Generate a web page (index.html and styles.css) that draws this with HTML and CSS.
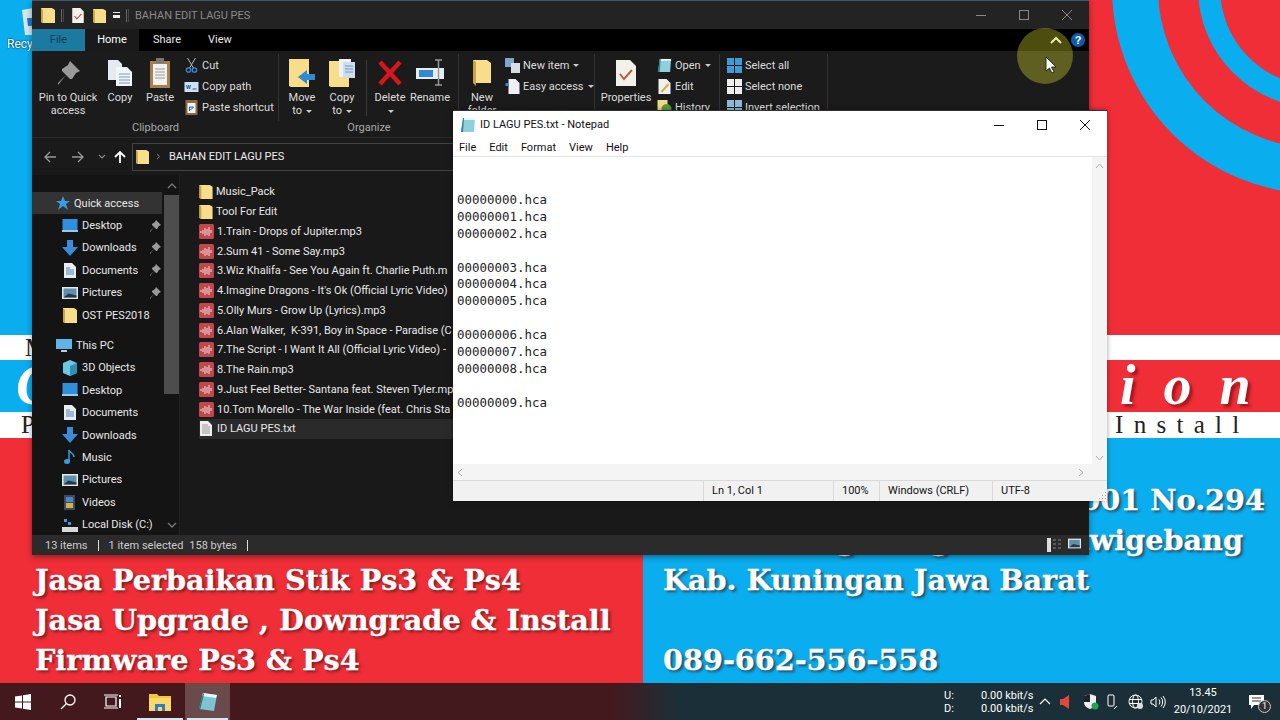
FILE: index.html
```html
<!DOCTYPE html>
<html lang="en">
<head>
    <meta charset="UTF-8">
    <title>ID LAGU PES.txt - Notepad</title>
    <link rel="stylesheet" href="styles.css">
</head>
<body>
    <svg class="sprites" width="0" height="0">
        <symbol id="folder" viewBox="0 0 14 16"><path d="M0 1h11l3 2v13H2l-2-1z" fill="#f8dd8a"/><path d="M0 1l2 2v13l-2-1z" fill="#c9a344"/></symbol>
        <symbol id="audio" viewBox="0 0 15 15"><rect width="15" height="15" rx="1.5" fill="#c0474c"/><path d="M2 7v2M4 6v4M6 4v8M8 5v6M10 3v9M12 6v3" stroke="#f4dddd" stroke-width="1"/></symbol>
        <symbol id="txt" viewBox="0 0 12 15"><path d="M0 0h8l4 4v11H0z" fill="#eee"/><path d="M2 4h6M2 6h8M2 8h8M2 10h8M2 12h8" stroke="#888" stroke-width=".8"/></symbol>
        <symbol id="note" viewBox="0 0 16 16"><path d="M3 1h12l-1 14H1z" fill="#8fd0dc"/><path d="M3 1h12v2H3z" fill="#e8f6f8"/><path d="M1 15l2-14 1 0-1 14z" fill="#2f7f96"/></symbol>
        <symbol id="check" viewBox="0 0 20 26"><path d="M0 0h14l6 6v20H0z" fill="#f3f1ec"/><path d="M4 14l4 5 8-9" fill="none" stroke="#c4583a" stroke-width="2"/></symbol>
        <symbol id="pages" viewBox="0 0 24 26"><path d="M0 0h10l4 4v16H0z" fill="#e6e9ef"/><path d="M8 7h11l5 5v14H8z" fill="#f3f6fb"/><path d="M11 14h11M11 17h11M11 20h11M11 23h11" stroke="#6f98c9"/></symbol>
        <symbol id="desktop" viewBox="0 0 16 14"><rect width="15" height="11" x=".5" fill="#2e8fdc"/><rect y="11" width="16" height="2" fill="#9cc7ea"/></symbol>
        <symbol id="down" viewBox="0 0 16 16"><path d="M5 0h6v7h5l-8 9-8-9h5z" fill="#3a8bd8"/></symbol>
        <symbol id="doc" viewBox="0 0 12 15"><path d="M0 0h8l4 4v11H0z" fill="#e9edf2"/><path d="M2 5h4M2 7h8M2 9h8M2 11h8" stroke="#4b87b5"/></symbol>
        <symbol id="pic" viewBox="0 0 16 12"><rect width="16" height="12" fill="#e8e8e8"/><rect x="1.5" y="1.5" width="13" height="9" fill="#5f8fae"/><path d="M1.5 10.500l5-4 8 2v2z" fill="#24384a"/></symbol>
        <symbol id="pin" viewBox="0 0 12 12"><path d="M7 0l5 5-2 1-2 3-1 0-2-2-4 5 0-1 4-4-2-2 0-1 3-2z" fill="#9a9a9a"/></symbol>
        <symbol id="grid" viewBox="0 0 15 15"><path d="M0 0h7v7H0zM8 0h7v7H8zM0 8h7v7H0zM8 8h7v7H8z"/></symbol>
    </svg>

    <div class="desktop">
        <div class="wallpaper">
            <div class="wp-blue"></div><div class="wp-red"></div>
            <div class="wp-white"></div><div class="wp-white"></div>
            <div class="wp-blue"></div><div class="wp-red"></div>
            <div class="wp-white"></div><div class="wp-white"></div>
            <div class="wp-red"></div><div class="wp-blue"></div>
        </div>
        <svg class="arcs" width="192" height="335" viewBox="1088 0 192 335">
            <circle cx="1318" cy="-12" r="206" fill="#0aaeef"/>
            <circle cx="1318" cy="-12" r="160" fill="#ef2e37"/>
            <circle cx="1318" cy="-12" r="120" fill="#0aaeef"/>
            <circle cx="1318" cy="-12" r="98" fill="#ef2e37"/>
        </svg>

        <div class="bin">
            <svg width="11" height="27" viewBox="0 0 11 27"><path d="M0 2l11-2v27H3z" fill="#d5e6ee"/><path d="M5 10h6v8H6z" fill="#1c7cc0"/></svg>
            <span>Recy</span>
        </div>
        <span class="wp-serif wp-m">M</span>
        <span class="wp-serif wp-p">P</span>
        <span class="wp-c">C</span>
        <span class="wp-ion">i o n</span>
        <span class="wp-serif wp-install">Install</span>
        <div class="promo promo-left">
            <p>Jasa Perbaikan Stik Ps3 &amp; Ps4</p>
            <p>Jasa Upgrade , Downgrade &amp; Install</p>
            <p>Firmware Ps3 &amp; Ps4</p>
        </div>
        <div class="promo promo-right">
            <p>Kab. Kuningan Jawa Barat</p>
            <p class="phone">089-662-556-558</p>
        </div>
        <span class="promo-line addr-a">001 No.294</span>
        <span class="promo-line addr-b">awigebang</span>
        <span class="promo-line g-a">g</span>
        <span class="promo-line g-b">g</span>

        <!-- file explorer -->
        <div class="explorer">
            <div class="ex-title">
                <svg class="i14" width="14" height="16"><use href="#folder"/></svg>
                <span class="bar"></span>
                <svg class="qa-check" width="12" height="15"><use href="#check"/></svg>
                <svg class="qa-folder" width="13" height="15"><use href="#folder"/></svg>
                <span class="qa-drop"></span>
                <span class="bar"></span>
                <span class="ex-name">BAHAN EDIT LAGU PES</span>
                <div class="win-btns dim">
                    <svg width="12" height="12"><path d="M1 6.500h10" stroke="currentColor"/></svg>
                    <svg width="12" height="12"><rect x="1.500" y="1.500" width="9" height="9" fill="none" stroke="currentColor"/></svg>
                    <svg width="12" height="12"><path d="M1 1l10 10M11 1L1 11" stroke="currentColor"/></svg>
                </div>
            </div>
            <div class="ex-tabs">
                <span class="tab tab-file">File</span>
                <span class="tab tab-home">Home</span>
                <span class="tab tab-share">Share</span>
                <span class="tab tab-view">View</span>
                <svg class="collapse" width="12" height="8"><path d="M1 7l5-5 5 5" fill="none" stroke="#eee" stroke-width="2"/></svg>
                <span class="help">?</span>
            </div>
            <div class="ribbon">
                <section class="rb-group g-clip">
                    <div class="rb-items">
                        <div class="big w58"><svg width="24" height="26" viewBox="0 0 12 12"><use href="#pin"/></svg><span>Pin to Quick<br>access</span></div>
                        <div class="big w40"><svg width="24" height="26"><use href="#pages"/></svg><span>Copy</span></div>
                        <div class="big w40"><svg width="20" height="30" viewBox="0 0 20 30"><rect y="3" width="20" height="27" fill="#a8804f"/><rect x="3" y="6" width="14" height="21" fill="#f2f2f2"/><path d="M5 11h10M5 14h10M5 17h10M5 20h10" stroke="#999"/><rect x="6" width="8" height="5" fill="#777"/></svg><span>Paste</span></div>
                        <div class="small-col">
                            <div class="small"><svg width="12" height="15" viewBox="0 0 12 15"><path d="M2 0l6 10M10 0L4 10" stroke="#bbb" stroke-width="1"/><circle cx="3" cy="12" r="2.200" fill="none" stroke="#3a8bd8" stroke-width="1.300"/><circle cx="9" cy="12" r="2.200" fill="none" stroke="#3a8bd8" stroke-width="1.300"/></svg>Cut</div>
                            <div class="small"><svg width="14" height="10" viewBox="0 0 14 10"><rect width="14" height="10" fill="#cfe2f3"/><path d="M2 3l1 4 1-4 1 4 1-4M8 7h4" stroke="#1d5f99" fill="none"/></svg>Copy path</div>
                            <div class="small"><svg width="12" height="15" viewBox="0 0 12 15"><rect width="12" height="15" fill="#8a6b45"/><rect x="2" y="3" width="8" height="10" fill="#f2f2f2"/><path d="M4 11V7h4M8 7L5 10" stroke="#1d5f99" fill="none"/></svg>Paste shortcut</div>
                        </div>
                    </div>
                    <p class="rb-label">Clipboard</p>
                </section>
                <section class="rb-group g-org">
                    <div class="rb-items">
                        <div class="big w40"><svg width="26" height="28" viewBox="0 0 26 28"><path d="M0 0h20v28H2l-2-1z" fill="#f8dd8a"/><path d="M26 15H18v-4l-9 7 9 7v-4h8z" fill="#2f8ad2"/></svg><span>Move<br>to <i class="caret"></i></span></div>
                        <div class="big w40"><svg width="26" height="28" viewBox="0 0 26 28"><path d="M0 2h20v26H2l-2-1z" fill="#f8dd8a"/><path d="M10 0h12v18H10z" fill="#eef2f8"/><path d="M14 3h12v16H14z" fill="#cfdcec"/><path d="M16 7h8M16 10h8M16 13h8" stroke="#6f98c9"/></svg><span>Copy<br>to <i class="caret"></i></span></div>
                        <span class="rb-sep"></span>
                        <div class="big w40"><svg width="26" height="28" viewBox="0 0 26 28"><path d="M3 3l20 22M23 3L3 25" stroke="#d8161c" stroke-width="4.500"/></svg><span>Delete<br><i class="caret"></i></span></div>
                        <div class="big w40 rename"><svg width="28" height="28" viewBox="0 0 28 28"><path d="M0 9h28v11H0z" fill="#e4eef6"/><rect x="3" y="11" width="14" height="7" fill="#2f8ad2"/><path d="M19 1h7M22.500 1v25M19 26h7" stroke="#999" stroke-width="1.500" fill="none"/></svg><span>Rename</span></div>
                    </div>
                    <p class="rb-label">Organize</p>
                </section>
                <section class="rb-group g-new">
                    <div class="rb-items">
                        <div class="big w40"><svg width="18" height="26" viewBox="0 0 18 26"><path d="M0 0h14l4 3v20H2l-2-1z" fill="#f8dd8a"/><path d="M0 0l3 2v24l-3-3z" fill="#c9a344"/></svg><span>New<br>folder</span></div>
                        <div class="small-col">
                            <div class="small"><svg width="15" height="15" viewBox="0 0 15 15"><path d="M0 0h9v9H0z" fill="#7da7cf"/><path d="M6 5h9v10H6z" fill="#d9dde3"/></svg>New item <i class="caret"></i></div>
                            <div class="small"><svg width="14" height="15" viewBox="0 0 14 15"><path d="M3 0h7l4 4v11H3z" fill="#eef0f3"/><path d="M0 4h3v3H0z" fill="#2f8ad2"/></svg>Easy access <i class="caret"></i></div>
                        </div>
                    </div>
                </section>
                <section class="rb-group g-open">
                    <div class="rb-items">
                        <div class="big w62"><svg width="20" height="26"><use href="#check"/></svg><span>Properties<br><i class="caret"></i></span></div>
                        <div class="small-col">
                            <div class="small"><svg width="14" height="15"><use href="#note"/></svg>Open <i class="caret"></i></div>
                            <div class="small"><svg width="12" height="15" viewBox="0 0 12 15"><path d="M0 0h8l4 4v11H0z" fill="#eef0f3"/><path d="M3 13l7-8" stroke="#d8b23a" stroke-width="2"/></svg>Edit</div>
                            <div class="small"><svg width="14" height="15" viewBox="0 0 14 15"><path d="M0 0h10v15H0z" fill="#f0d98a"/><circle cx="9" cy="9" r="5" fill="#5b9a3c"/></svg>History</div>
                        </div>
                    </div>
                </section>
                <section class="rb-group g-select">
                    <div class="rb-items">
                        <div class="small-col">
                            <div class="small"><svg class="g-blue" width="15" height="15"><use href="#grid"/></svg>Select all</div>
                            <div class="small"><svg class="g-white" width="15" height="15"><use href="#grid"/></svg>Select none</div>
                            <div class="small"><svg class="g-mix" width="15" height="15"><use href="#grid"/></svg>Invert selection</div>
                        </div>
                    </div>
                </section>
            </div>
            <div class="ex-address">
                <svg class="nav-arrow" width="14" height="12"><path d="M13 6H2M7 1L2 6l5 5" fill="none" stroke="#999" stroke-width="1.300"/></svg>
                <svg class="nav-arrow" width="14" height="12"><path d="M1 6h11M7 1l5 5-5 5" fill="none" stroke="#999" stroke-width="1.300"/></svg>
                <svg class="nav-drop" width="8" height="6"><path d="M1 1l3 3 3-3" fill="none" stroke="#888" stroke-width="1.200"/></svg>
                <svg class="nav-up" width="12" height="13"><path d="M6 13V2M1 7l5-5 5 5" fill="none" stroke="#fff" stroke-width="1.800"/></svg>
                <div class="addr-box">
                    <svg width="13" height="15"><use href="#folder"/></svg>
                    <svg class="crumb" width="5" height="7"><path d="M1 1l2.500 2.500L1 6" fill="none" stroke="#888"/></svg>
                    <span>BAHAN EDIT LAGU PES</span>
                </div>
            </div>
            <div class="ex-body">
                <nav class="nav-pane">
                    <div class="nav-list">
                        <div class="nav-row top active"><svg width="14" height="14" viewBox="0 0 14 14"><path d="M7 0l2 5h5l-4 3 2 6-5-4-5 4 2-6-4-3h5z" fill="#3a9be0"/></svg>Quick access</div>
                        <div class="nav-row"><svg width="16" height="14"><use href="#desktop"/></svg>Desktop<svg class="pin" width="12" height="12"><use href="#pin"/></svg></div>
                        <div class="nav-row"><svg width="16" height="16"><use href="#down"/></svg>Downloads<svg class="pin" width="12" height="12"><use href="#pin"/></svg></div>
                        <div class="nav-row"><svg width="16" height="15" viewBox="-2 0 16 15"><use href="#doc" width="12" height="15"/></svg>Documents<svg class="pin" width="12" height="12"><use href="#pin"/></svg></div>
                        <div class="nav-row"><svg width="16" height="12"><use href="#pic"/></svg>Pictures<svg class="pin" width="12" height="12"><use href="#pin"/></svg></div>
                        <div class="nav-row"><svg width="16" height="16" viewBox="-1 0 16 16"><use href="#folder" width="14" height="16"/></svg>OST PES2018</div>
                        <div class="nav-row top gap"><svg width="16" height="14" viewBox="0 0 16 14"><rect width="16" height="10" fill="#5fb4e8"/><path d="M5 12h6" stroke="#ccc" stroke-width="2"/></svg>This PC</div>
                        <div class="nav-row"><svg width="16" height="16" viewBox="0 0 16 16"><path d="M8 0l7 3v10l-7 3-7-3V3z" fill="#6ec6e2"/><path d="M8 6l7-3v10l-7 3z" fill="#2f8fb5"/></svg>3D Objects</div>
                        <div class="nav-row"><svg width="16" height="14"><use href="#desktop"/></svg>Desktop</div>
                        <div class="nav-row"><svg width="16" height="15" viewBox="-2 0 16 15"><use href="#doc" width="12" height="15"/></svg>Documents</div>
                        <div class="nav-row"><svg width="16" height="16"><use href="#down"/></svg>Downloads</div>
                        <div class="nav-row"><svg width="16" height="16" viewBox="0 0 16 16"><path d="M7 1v11" stroke="#3a9be0" stroke-width="1.500"/><path d="M7 1c1 3 5 3 5 7" fill="none" stroke="#3a9be0" stroke-width="1.500"/><ellipse cx="5" cy="12.500" rx="3" ry="2.500" fill="#3a9be0"/></svg>Music</div>
                        <div class="nav-row"><svg width="16" height="12"><use href="#pic"/></svg>Pictures</div>
                        <div class="nav-row"><svg width="16" height="15" viewBox="0 0 16 15"><rect x="2" width="11" height="15" fill="#3b4a63"/><rect x="4" y="2" width="7" height="5" fill="#4f86c9"/><rect x="4" y="8" width="7" height="5" fill="#d8b23a"/></svg>Videos</div>
                        <div class="nav-row"><svg width="16" height="14" viewBox="0 0 16 14"><path d="M0 9h16v5H0z" fill="#d9d9d9"/><path d="M2 1h3v3H2zM6 4h3v3H6z" fill="#3a9be0"/></svg>Local Disk (C:)</div>
                    </div>
                    <div class="nav-scroll">
                        <svg width="10" height="6"><path d="M1 5l4-4 4 4" fill="none" stroke="#777" stroke-width="1.300"/></svg>
                        <span class="nav-thumb"></span>
                        <svg width="10" height="6"><path d="M1 1l4 4 4-4" fill="none" stroke="#777" stroke-width="1.300"/></svg>
                    </div>
                </nav>
                <div class="file-list">
                    <div class="file"><svg width="14" height="15"><use href="#folder"/></svg>Music_Pack</div>
                    <div class="file"><svg width="14" height="15"><use href="#folder"/></svg>Tool For Edit</div>
                    <div class="file"><svg width="15" height="15"><use href="#audio"/></svg>1.Train - Drops of Jupiter.mp3</div>
                    <div class="file"><svg width="15" height="15"><use href="#audio"/></svg>2.Sum 41 - Some Say.mp3</div>
                    <div class="file"><svg width="15" height="15"><use href="#audio"/></svg>3.Wiz Khalifa - See You Again ft. Charlie Puth.m</div>
                    <div class="file"><svg width="15" height="15"><use href="#audio"/></svg>4.Imagine Dragons - It's Ok (Official Lyric Video)</div>
                    <div class="file"><svg width="15" height="15"><use href="#audio"/></svg>5.Olly Murs - Grow Up (Lyrics).mp3</div>
                    <div class="file"><svg width="15" height="15"><use href="#audio"/></svg>6.Alan Walker,&nbsp; K-391, Boy in Space - Paradise (C</div>
                    <div class="file"><svg width="15" height="15"><use href="#audio"/></svg>7.The Script - I Want It All (Official Lyric Video) -</div>
                    <div class="file"><svg width="15" height="15"><use href="#audio"/></svg>8.The Rain.mp3</div>
                    <div class="file"><svg width="15" height="15"><use href="#audio"/></svg>9.Just Feel Better- Santana feat. Steven Tyler.mp</div>
                    <div class="file"><svg width="15" height="15"><use href="#audio"/></svg>10.Tom Morello - The War Inside (feat. Chris Sta</div>
                    <div class="file selected"><svg width="15" height="15" viewBox="-1 0 15 15"><use href="#txt" width="12" height="15"/></svg>ID LAGU PES.txt</div>
                </div>
            </div>
            <div class="ex-status">
                <span>13 items</span><span class="st-bar"></span><span>1 item selected</span><span class="st-bytes">158 bytes</span><span class="st-bar"></span>
                <div class="view-btns">
                    <svg width="15" height="14" viewBox="0 0 15 14"><path d="M0 0h4v14H0z" fill="#ddd"/><path d="M6 2h3M11 2h3M6 6h3M11 6h3M6 10h3M11 10h3" stroke="#888"/></svg>
                    <svg width="13" height="11"><use href="#pic"/></svg>
                </div>
            </div>
        </div>

        <!-- cursor highlight -->
        <span class="cursor-glow"></span>
        <svg class="cursor" width="12" height="18" viewBox="0 0 12 18"><path d="M1 1v14l3.500-3 2.500 5 2-1-2.500-5H11z" fill="#fff" stroke="#111" stroke-width=".8"/></svg>

        <!-- notepad -->
        <div class="notepad">
            <div class="np-title">
                <svg width="16" height="16"><use href="#note"/></svg>
                <span>ID LAGU PES.txt - Notepad</span>
                <div class="win-btns">
                    <svg width="12" height="12"><path d="M1 6.500h10" stroke="currentColor"/></svg>
                    <svg width="12" height="12"><rect x="1.500" y="1.500" width="9" height="9" fill="none" stroke="currentColor"/></svg>
                    <svg width="12" height="12"><path d="M1 1l10 10M11 1L1 11" stroke="currentColor"/></svg>
                </div>
            </div>
            <div class="np-menu"><span>File</span><span>Edit</span><span>Format</span><span>View</span><span>Help</span></div>
            <div class="np-main">
                <pre class="np-text">

00000000.hca
00000001.hca
00000002.hca

00000003.hca
00000004.hca
00000005.hca

00000006.hca
00000007.hca
00000008.hca

00000009.hca</pre>
                <div class="np-vscroll">
                    <svg width="9" height="6"><path d="M1 5l3.500-4L8 5" fill="none" stroke="#aaa"/></svg>
                    <svg width="9" height="6"><path d="M1 1l3.500 4L8 1" fill="none" stroke="#aaa"/></svg>
                </div>
            </div>
            <div class="np-hscroll">
                <svg width="6" height="9"><path d="M5 1L1 4.500 5 8" fill="none" stroke="#aaa"/></svg>
                <svg width="6" height="9"><path d="M1 1l4 3.500L1 8" fill="none" stroke="#aaa"/></svg>
            </div>
            <div class="np-status">
                <span class="cell c-pos">Ln 1, Col 1</span>
                <span class="cell c-zoom">100%</span>
                <span class="cell c-eol">Windows (CRLF)</span>
                <span class="cell c-enc">UTF-8</span>
                <svg class="grip" width="10" height="10" viewBox="0 0 10 10"><path d="M8 2h1v1H8zM5 5h1v1H5zM8 5h1v1H8zM2 8h1v1H2zM5 8h1v1H5zM8 8h1v1H8z" fill="#aaa"/></svg>
            </div>
        </div>
    </div>

    <footer class="taskbar">
        <div class="tb-btn"><svg width="16" height="16" viewBox="0 0 16 16"><path d="M0 2.500l7-1v6H0zM8 1.300L16 0v7.500H8zM0 8.500h7v6l-7-1zM8 8.500h8V16l-8-1.200z" fill="#fff"/></svg></div>
        <div class="tb-btn"><svg width="16" height="16" viewBox="0 0 16 16"><circle cx="10" cy="6" r="5" fill="none" stroke="#fff" stroke-width="1.300"/><path d="M6.500 9.500L1 15" stroke="#fff" stroke-width="1.300"/></svg></div>
        <div class="tb-btn"><svg width="18" height="15" viewBox="0 0 18 15"><path d="M2 3h10v9H2zM0 1h14M0 14h14" fill="none" stroke="#fff" stroke-width="1.200"/><path d="M16 1v2M16 5v9" stroke="#fff" stroke-width="2"/></svg></div>
        <div class="tb-btn on wide"><svg width="22" height="18" viewBox="0 0 22 18"><path d="M0 1h8l2 2h12v15H0z" fill="#f4c63c"/><path d="M0 5h22v13H0z" fill="#fbd968"/><path d="M6 18v-7h10v7h-3v-4H9v4z" fill="#2b7fc4"/></svg></div>
        <div class="tb-btn on active"><svg width="20" height="20" viewBox="0 0 20 20"><path d="M5 1l14 2-3 16L1 17z" fill="#7cc4cf"/><path d="M5 1l14 2-1 3L4 4z" fill="#eaf6f8"/><path d="M5 1L1 17l1 1 4-16z" fill="#1f6f87"/></svg></div>
        <div class="tray">
            <div class="net"><span>U:</span><span>0.00 kbit/s</span><span>D:</span><span>0.00 kbit/s</span></div>
            <svg class="tray-i t-chev" width="12" height="7"><path d="M1 6l5-5 5 5" fill="none" stroke="#fff" stroke-width="1.200"/></svg>
            <svg class="tray-i t-spk" width="16" height="16" viewBox="0 0 16 16"><path d="M2 5h3l6-4v14l-6-4H2z" fill="#e0483a"/></svg>
            <svg class="tray-i t-shield" width="16" height="16" viewBox="0 0 16 16"><path d="M7 0l6 2v6c0 4-3 6-6 7-3-1-6-3-6-7V2z" fill="#eee"/><path d="M7 0v8H1V2z" fill="#222"/><circle cx="12" cy="12" r="3.500" fill="#22a255"/></svg>
            <svg class="tray-i t-usb" width="12" height="16" viewBox="0 0 12 16"><rect x="2" y="1" width="6" height="11" rx="1" fill="none" stroke="#fff"/><path d="M8 15l3-3" stroke="#fff"/></svg>
            <svg class="tray-i t-net" width="16" height="16" viewBox="0 0 16 16"><circle cx="7.500" cy="7.500" r="6.500" fill="none" stroke="#fff"/><ellipse cx="7.500" cy="7.500" rx="3" ry="6.500" fill="none" stroke="#fff"/><path d="M1 5.500h13M1 9.500h13" stroke="#fff"/><circle cx="12" cy="12" r="3" fill="#ddd"/></svg>
            <svg class="tray-i t-vol" width="16" height="14" viewBox="0 0 16 14"><path d="M1 5h2l3-3v10L3 9H1z" fill="none" stroke="#fff"/><path d="M9 4.500a4 4 0 0 1 0 5M11 2.500a7 7 0 0 1 0 9M13 1a9 9 0 0 1 0 12" fill="none" stroke="#fff"/></svg>
            <div class="clock"><span>13.45</span><span>20/10/2021</span></div>
            <div class="notify">
                <svg width="15" height="14" viewBox="0 0 15 14"><path d="M0 0h15v10H5l-3 4v-4H0z" fill="#fff"/><path d="M3 3h9M3 6h9" stroke="#333"/></svg>
                <span class="badge">1</span>
            </div>
        </div>
    </footer>
</body>
</html>
```

FILE: styles.css
```css
* {
    box-sizing: border-box;
}

html, body {
    margin: 0;
    height: 100%;
}

body {
    width: 1280px;
    height: 720px;
    overflow: hidden;
    display: flex;
    flex-direction: column;
    font-family: Roboto, "Noto Sans", sans-serif;
    font-size: 11px;
}

p {
    margin: 0;
}

svg {
    display: block;
    flex-shrink: 0;
}

.sprites {
    position: absolute;
}

.desktop {
    position: relative;
    height: 683px;
    overflow: hidden;
}

/* wallpaper */
.wallpaper {
    display: grid;
    grid-template-columns: 643px 637px;
    grid-template-rows: 335px 25px 52px 26px 245px;
    height: 100%;
}

.wp-blue { background: #0aaeef; }
.wp-red { background: #ef2e37; }
.wp-white { background: #fff; }

.arcs {
    position: absolute;
    left: 1088px;
    top: 0;
}

.bin {
    position: absolute;
    left: 7px;
    top: 8px;
    width: 25px;
    overflow: hidden;
    color: #fff;
    font-size: 12px;
    text-shadow: 0 0 2px #000;
}

.bin svg {
    margin-left: 15px;
}

.bin span {
    display: block;
    margin-top: 2px;
}

.wp-serif {
    position: absolute;
    font-family: "Liberation Serif", serif;
    font-size: 25px;
    color: #222;
    line-height: 24px;
    overflow: hidden;
}

.wp-m { left: 25px; top: 336px; width: 7px; }
.wp-p { left: 21px; top: 413px; width: 11px; }

.wp-install {
    left: 1115px;
    top: 413px;
    letter-spacing: 10.3px;
    white-space: nowrap;
}

.wp-c {
    position: absolute;
    left: 16px;
    top: 362px;
    width: 16px;
    overflow: hidden;
    font: italic bold 56px/46px "Liberation Serif", serif;
    color: #fff;
}

.wp-ion {
    position: absolute;
    left: 1120px;
    top: 362px;
    font: italic bold 56px/46px "Liberation Serif", serif;
    letter-spacing: 7px;
    color: #fff;
    text-shadow: 3px 3px 3px #a5161c;
}

.promo, .promo-line {
    position: absolute;
    font-family: "DejaVu Serif", serif;
    font-weight: bold;
    font-size: 28.7px;
    line-height: 40px;
    color: #fff;
    -webkit-text-stroke: .3px #fff;
    text-shadow: 2px 2px 3px rgba(60, 20, 20, .7);
    white-space: nowrap;
}

.promo-left { left: 35px; top: 560px; }
.promo-right { left: 663px; top: 560px; }
.phone { margin-top: 40px; }

.addr-a { right: 15px; top: 480px; }
.addr-b { right: 37px; top: 520px; }
.g-a { left: 836px; top: 520px; }
.g-b { left: 930px; top: 520px; }

/* explorer */
.explorer {
    position: absolute;
    left: 32px;
    top: 0;
    width: 1057px;
    height: 555px;
    display: flex;
    flex-direction: column;
    background: #1a1a1a;
    color: #e8e8e8;
    box-shadow: 0 2px 6px rgba(0, 0, 0, .4);
}

.ex-title {
    height: 29px;
    display: flex;
    align-items: center;
    padding-left: 9px;
    background: #232323;
    border-top: 1px solid #3b5a66;
}

.bar {
    width: 3px;
    height: 13px;
    margin-left: 6px;
    border-left: 1px solid #666;
    border-right: 1px solid #444;
}

.qa-check { margin-left: 8px; }
.qa-folder { margin-left: 9px; }

.qa-drop {
    width: 7px;
    height: 6px;
    margin-left: 7px;
    border-top: 1px solid #eee;
    border-bottom: 3px solid #eee;
}

.ex-name {
    margin-left: 6px;
    color: #8a8a8a;
}

.win-btns {
    margin-left: auto;
    display: flex;
    gap: 31px;
    padding-right: 16px;
    color: #111;
}

.win-btns.dim {
    color: #8a8a8a;
}

.ex-tabs {
    height: 22px;
    display: flex;
    align-items: center;
    position: relative;
    background: #000;
}

.tab {
    height: 100%;
    line-height: 22px;
    text-align: center;
}

.tab-file {
    width: 53px;
    background: #1c7aa0;
    color: #123e55;
}

.tab-home {
    width: 54px;
    height: 23px;
    margin-top: 1px;
    background: #1a1a1a;
    color: #fff;
}

.tab-share { width: 56px; }
.tab-view { width: 50px; }

.collapse {
    margin-left: auto;
    margin-right: 9px;
}

.help {
    width: 14px;
    height: 14px;
    margin-right: 4px;
    border-radius: 50%;
    background: #0f5cad;
    color: #fff;
    font: bold 11px/14px "Liberation Sans", sans-serif;
    text-align: center;
}

.ribbon {
    height: 87px;
    display: flex;
    background: #1b1b1b;
    border-bottom: 1px solid #2a2a2a;
}

.rb-group {
    display: flex;
    flex-direction: column;
    margin-top: 3px;
}

.g-clip { width: 247px; padding-left: 7px; }
.g-org { width: 180px; padding-left: 3px; }
.g-new { width: 136px; padding-left: 3px; }
.g-open { width: 125px; }
.g-select { width: 108px; padding-left: 7px; }

.rb-items {
    height: 67px;
    display: flex;
    border-right: 1px solid #333;
}

.rb-label {
    height: 14px;
    margin-left: -7px;
    text-align: center;
    color: #aaa;
}

.g-org .rb-label { margin-left: -3px; }

.big {
    display: flex;
    flex-direction: column;
    flex-shrink: 0;
    align-items: center;
    text-align: center;
    line-height: 13px;
    white-space: nowrap;
}

.big svg {
    height: 30px;
    margin-top: 4px;
}

.big span {
    margin-top: 3px;
    color: #ddd;
}

.w58 { width: 58px; margin-right: 3px; }
.w40 { width: 40px; }
.w62 { width: 62px; }

.rb-sep {
    width: 1px;
    height: 56px;
    margin: 6px 3px 0 4px;
    background: #3a3a3a;
}

.caret {
    display: inline-block;
    width: 0;
    height: 0;
    margin-left: 1px;
    vertical-align: middle;
    border: 3px solid transparent;
    border-top: 3px solid #ccc;
    border-bottom: 0;
}

.small-col {
    display: flex;
    flex-direction: column;
    padding-top: 1px;
}

.g-clip .small-col { margin-left: 4px; }

.g-new .small-col { margin-left: 3px; }

.small {
    height: 21px;
    display: flex;
    align-items: center;
    gap: 3px;
    white-space: nowrap;
    color: #ddd;
}

.small .caret {
    margin-left: 1px;
}

.small svg {
    width: 15px;
}

.g-blue { fill: #3f9ad6; }
.g-white { fill: #eee; }
.g-mix { fill: #8fb8d8; }

.ex-address {
    height: 37px;
    display: flex;
    align-items: center;
    padding-left: 11px;
}

.nav-arrow { margin-right: 14px; }
.nav-drop { margin-right: 8px; margin-left: -1px; }
.nav-up { margin-right: 6px; }

.addr-box {
    flex: 1;
    height: 28px;
    display: flex;
    align-items: center;
    padding-left: 3px;
    border: 1px solid #444;
    color: #eee;
}

.crumb { margin: 0 8px 0 7px; }

.ex-body {
    flex: 1;
    display: flex;
    min-height: 0;
}

.nav-pane {
    width: 148px;
    display: flex;
    border-right: 1px solid #202020;
    background: #141414;
}

.nav-list {
    width: 130px;
    overflow: hidden;
    padding-top: 17px;
}

.nav-row {
    height: 22.4px;
    display: flex;
    align-items: center;
    gap: 4px;
    padding-left: 30px;
    position: relative;
    white-space: nowrap;
}

.nav-row.top {
    padding-left: 24px;
}

.nav-row.active {
    background: #333;
}

.nav-row.gap {
    margin-top: 8px;
}

.pin {
    position: absolute;
    right: 1px;
}

.nav-scroll {
    width: 15px;
    margin-left: 2px;
    display: flex;
    flex-direction: column;
    align-items: center;
    padding: 8px 0 7px;
}

.nav-thumb {
    width: 15px;
    height: 199px;
    margin: 6px 0 auto;
    background: #4d4d4d;
}

.file-list {
    flex: 1;
    min-width: 0;
    padding: 7px 0 0 19px;
    overflow: hidden;
    background: #191919;
}

.file {
    height: 19.75px;
    display: flex;
    align-items: center;
    gap: 3px;
    white-space: nowrap;
}

.file.selected {
    background: #2a2a2a;
}

.ex-status {
    height: 20px;
    display: flex;
    align-items: center;
    padding-left: 13px;
    background: #2b2b2b;
    color: #ccc;
}

.st-bar {
    width: 1px;
    height: 11px;
    margin: 0 10px;
    background: #ddd;
}

.st-bytes {
    margin-left: 6px;
}

.view-btns {
    margin-left: auto;
    display: flex;
    gap: 6px;
    padding-right: 8px;
}

/* cursor */
.cursor-glow {
    position: absolute;
    left: 1017px;
    top: 28px;
    width: 56px;
    height: 56px;
    border-radius: 50%;
    background: rgba(235, 235, 50, .33);
}

.cursor {
    position: absolute;
    left: 1045px;
    top: 56px;
}

/* notepad */
.notepad {
    position: absolute;
    left: 453px;
    top: 110px;
    width: 654px;
    height: 391px;
    display: flex;
    flex-direction: column;
    background: #fff;
    border-top: 1px solid #333;
    color: #111;
    box-shadow: 0 0 5px rgba(0, 0, 0, .4);
}

.np-title {
    height: 27px;
    display: flex;
    align-items: center;
    gap: 4px;
    padding-left: 7px;
}

.np-title .win-btns {
    gap: 31px;
    padding-right: 16px;
}

.np-menu {
    height: 19px;
    display: flex;
    gap: 13px;
    padding-left: 6px;
    border-bottom: 1px solid #e4e4e4;
    line-height: 20px;
}

.np-main {
    flex: 1;
    display: flex;
    justify-content: space-between;
    min-height: 0;
}

.np-text {
    margin: 0;
    padding: 18px 0 0 4px;
    font: 12.46px/16.9px "DejaVu Sans Mono", monospace;
    color: #222;
}

.np-vscroll {
    width: 15px;
    display: flex;
    flex-direction: column;
    align-items: center;
    justify-content: space-between;
    padding: 6px 0 3px;
    background: #f4f4f4;
}

.np-hscroll {
    height: 16px;
    display: flex;
    align-items: center;
    justify-content: space-between;
    padding: 0 23px 0 4px;
    background: #f4f4f4;
}

.np-status {
    height: 21px;
    display: flex;
    align-items: flex-end;
    position: relative;
    border-top: 1px solid #d9d9d9;
    background: #f1f1f1;
    line-height: 20px;
}

.cell {
    height: 100%;
    padding-left: 8px;
    border-left: 1px solid #d9d9d9;
}

.c-pos { margin-left: 250px; width: 130px; }
.c-zoom { width: 46px; }
.c-eol { width: 113px; }

.grip {
    margin-left: auto;
    margin-bottom: 1px;
}

/* taskbar */
.taskbar {
    height: 37px;
    display: flex;
    background: linear-gradient(90deg, #44191d 0, #44191d 610px, #1b2f38 680px, #1b2f38 100%);
    color: #fff;
}

.tb-btn {
    width: 45px;
    display: flex;
    align-items: center;
    justify-content: center;
    position: relative;
}

.tb-btn.wide {
    width: 50px;
}

.tb-btn.on::after {
    content: "";
    position: absolute;
    left: 2px;
    right: 2px;
    bottom: 0;
    height: 2px;
    background: #d8e8ee;
}

.tb-btn.active {
    background: #6a4a4a;
}

.tray {
    margin-left: auto;
    display: flex;
    align-items: center;
}

.net {
    display: grid;
    grid-template-columns: 37px 58px;
    line-height: 13px;
}

.tray-i {
    margin-right: 8px;
}

.t-chev { margin-right: 7px; }
.t-spk { margin-right: 9px; }
.t-shield { margin-right: 7px; }
.t-usb { margin-right: 10px; }
.t-net { margin-right: 6px; }
.t-vol { margin-right: 7px; }

.clock {
    width: 60px;
    display: flex;
    flex-direction: column;
    align-items: center;
    gap: 3px;
    line-height: 14px;
}

.notify {
    width: 47px;
    position: relative;
    display: flex;
    justify-content: center;
}

.badge {
    position: absolute;
    left: 25px;
    top: 5px;
    width: 13px;
    height: 13px;
    border: 1px solid #ccc;
    border-radius: 50%;
    background: #333;
    font-size: 9px;
    line-height: 11px;
    text-align: center;
}
```
